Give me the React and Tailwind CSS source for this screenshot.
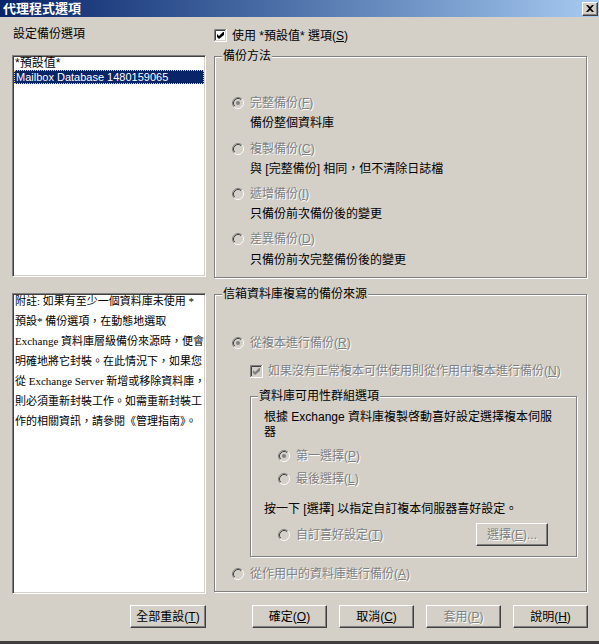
import React from "react";

const DIS = "text-[#808080] [text-shadow:1px_1px_0_#fff]";
const SUNKEN =
  "border border-t-[#808080] border-l-[#808080] border-b-white border-r-white shadow-[inset_1px_1px_0_#404040,inset_-1px_-1px_0_#d4d0c8]";

function Radio({ checked, disabled = true }) {
  return (
    <svg width="12" height="12" viewBox="0 0 12 12" className="shrink-0">
      <circle cx="6" cy="6" r="4.5" fill={disabled ? "#d4d0c8" : "#fff"} />
      <path d="M9.89 2.11 A5.5 5.5 0 0 0 2.11 9.89" stroke="#808080" fill="none" />
      <path d="M2.11 9.89 A5.5 5.5 0 0 0 9.89 2.11" stroke="#ffffff" fill="none" />
      <path d="M9.18 2.82 A4.5 4.5 0 0 0 2.82 9.18" stroke="#404040" fill="none" />
      <path d="M2.82 9.18 A4.5 4.5 0 0 0 9.18 2.82" stroke="#d4d0c8" fill="none" />
      {checked && <circle cx="6" cy="6" r="2" fill={disabled ? "#808080" : "#000"} />}
    </svg>
  );
}

function Check({ checked = true, disabled }) {
  return (
    <svg width="13" height="13" viewBox="0 0 13 13" className="shrink-0">
      <rect x="2" y="2" width="9" height="9" fill={disabled ? "#d4d0c8" : "#ffffff"} />
      <path d="M0.5 12 V0.5 H12" stroke="#808080" fill="none" />
      <path d="M1.5 11 V1.5 H11" stroke="#404040" fill="none" />
      <path d="M0 12.5 H12.5 V0" stroke="#ffffff" fill="none" />
      <path d="M1 11.5 H11.5 V1" stroke="#d4d0c8" fill="none" />
      {checked && (
        <polygon
          points="3,5 5,7 9,3 10,3 10,6 5,10 3,8"
          fill={disabled ? "#808080" : "#000000"}
        />
      )}
    </svg>
  );
}

function Group({ label, className, children }) {
  return (
    <div
      className={`relative border border-[#808080] shadow-[inset_1px_1px_0_#fff,1px_1px_0_#fff] ${className}`}
    >
      <span className="absolute left-[7px] -top-[8px] bg-[#d4d0c8] px-[1px] leading-[14px] whitespace-nowrap">
        {label}
      </span>
      {children}
    </div>
  );
}

function RadioRow({ checked, children, className = "" }) {
  return (
    <div className={`flex items-center h-[20px] gap-[6px] ${className}`}>
      <Radio checked={checked} />
      <span className={`${DIS} leading-[14px] whitespace-nowrap`}>{children}</span>
    </div>
  );
}

function Btn({ children, disabled, className = "" }) {
  return (
    <button
      className={`h-[23px] flex items-center justify-center bg-[#d4d0c8] border border-t-white border-l-white border-r-[#404040] border-b-[#404040] shadow-[inset_-1px_-1px_0_#808080] leading-[14px] whitespace-nowrap ${
        disabled ? DIS : "text-black"
      } ${className}`}
    >
      {children}
    </button>
  );
}

export default function App() {
  return (
    <div className="w-[599px] h-[644px] bg-[#d4d0c8] flex flex-col overflow-hidden text-[12px] leading-[14px] text-black font-['Liberation_Sans','Noto_Sans_CJK_TC',sans-serif]">
      {/* Title bar */}
      <div className="h-[17px] shrink-0 flex items-center justify-between bg-linear-to-r from-[#0a246a] to-[#a6caf0] pl-[3px] pr-[1px]">
        <span className="text-white font-bold text-[13px] leading-[16px]">代理程式選項</span>
        <div className="w-[16px] h-[14px] flex items-center justify-center bg-[#d4d0c8] border border-t-white border-l-white border-r-[#404040] border-b-[#404040] shadow-[inset_-1px_-1px_0_#808080]">
          <svg width="8" height="7" viewBox="0 0 8 7">
            <path d="M0 0 L2 0 L4 2 L6 0 L8 0 L5 3.5 L8 7 L6 7 L4 5 L2 7 L0 7 L3 3.5 Z" fill="#000" />
          </svg>
        </div>
      </div>

      {/* Main */}
      <div className="flex pt-[10px] pl-[12px] gap-[8px] h-[577px] shrink-0">
        {/* Left column */}
        <div className="w-[194px] flex flex-col">
          <div className="h-[28px] pl-[1px] leading-[14px]">設定備份選項</div>
          <div className={`h-[222px] bg-white p-[1px] text-[11px] ${SUNKEN}`}>
            <div className="h-[13px] pl-[1px] leading-[13px] text-[12px]">*預設值*</div>
            <div className="h-[14px] bg-[#0a246a] text-white border border-dotted border-[#e8d890] pl-[1px] leading-[12px] whitespace-nowrap">
              Mailbox Database 1480159065
            </div>
          </div>
          <div
            className={`mt-[16px] h-[301px] bg-white p-[1px] overflow-hidden text-[11px] ${SUNKEN} font-['Liberation_Serif','Noto_Sans_CJK_TC',serif]`}
          >
            <div className="pl-[1px] leading-[20px] -mt-[4px] whitespace-nowrap">
              附註: 如果有至少一個資料庫未使用 *
              <br />
              預設* 備份選項，在動態地選取
              <br />
              Exchange 資料庫層級備份來源時，便會
              <br />
              明確地將它封裝。在此情況下，如果您
              <br />
              從 Exchange Server 新增或移除資料庫，
              <br />
              則必須重新封裝工作。如需重新封裝工
              <br />
              作的相關資訊，請參閱《管理指南》。
            </div>
          </div>
        </div>

        {/* Right column */}
        <div className="w-[373px] flex flex-col">
          <div className="h-[29px] flex items-start gap-[5px] pt-[2px]">
            <Check />
            <span className="leading-[14px]">
              使用 *預設值* 選項(<u>S</u>)
            </span>
          </div>

          <Group label="備份方法" className="h-[222px] pt-[36px] pl-[17px]">
            <RadioRow checked>
              完整備份(<u>F</u>)
            </RadioRow>
            <div className="h-[20px] flex items-center pl-[18px]">備份整個資料庫</div>
            <RadioRow className="mt-[6px]">
              複製備份(<u>C</u>)
            </RadioRow>
            <div className="h-[20px] flex items-center pl-[18px]">與 [完整備份] 相同，但不清除日誌檔</div>
            <RadioRow className="mt-[5px]">
              遞增備份(<u>I</u>)
            </RadioRow>
            <div className="h-[20px] flex items-center pl-[18px]">只備份前次備份後的變更</div>
            <RadioRow className="mt-[5px]">
              差異備份(<u>D</u>)
            </RadioRow>
            <div className="h-[20px] mt-[1px] flex items-center pl-[18px]">只備份前次完整備份後的變更</div>
          </Group>

          <Group label="信箱資料庫複寫的備份來源" className="mt-[16px] h-[298px] pt-[38px] pl-[17px]">
            <RadioRow checked>
              從複本進行備份(<u>R</u>)
            </RadioRow>
            <div className="mt-[8px] h-[20px] flex items-center gap-[5px] pl-[18px]">
              <Check disabled />
              <span className={`${DIS} whitespace-nowrap`}>
                如果沒有正常複本可供使用則從作用中複本進行備份(<u>N</u>)
              </span>
            </div>

            <Group label="資料庫可用性群組選項" className="mt-[15px] ml-[18px] w-[327px] h-[161px] pt-[13px]">
              <div className="pl-[13px] leading-[15px] whitespace-nowrap">
                根據 Exchange 資料庫複製啓動喜好設定選擇複本伺服
                <br />器
              </div>
              <RadioRow checked className="mt-[6px] pl-[27px]">
                第一選擇(<u>P</u>)
              </RadioRow>
              <RadioRow className="mt-[3px] pl-[27px]">
                最後選擇(<u>L</u>)
              </RadioRow>
              <div className="mt-[10px] h-[20px] flex items-center pl-[13px] whitespace-nowrap">
                按一下 [選擇] 以指定自訂複本伺服器喜好設定。
              </div>
              <div className="mt-[4px] h-[23px] flex items-center justify-between pl-[27px] pr-[28px]">
                <div className="flex items-center gap-[6px]">
                  <Radio />
                  <span className={`${DIS} whitespace-nowrap`}>
                    自訂喜好設定(<u>T</u>)
                  </span>
                </div>
                <Btn disabled className="w-[72px]">
                  選擇(<u>E</u>)...
                </Btn>
              </div>
            </Group>

            <RadioRow className="mt-[7px]">
              從作用中的資料庫進行備份(<u>A</u>)
            </RadioRow>
          </Group>
        </div>
      </div>

      {/* Buttons */}
      <div className="mt-[11px] h-[23px] shrink-0 flex pl-[12px] gap-[8px]">
        <div className="w-[194px] flex justify-end">
          <Btn className="w-[76px]">
            全部重設(<u>T</u>)
          </Btn>
        </div>
        <div className="w-[374px] flex justify-end gap-[12px]">
          <Btn className="w-[75px]">
            確定(<u>O</u>)
          </Btn>
          <Btn className="w-[75px]">
            取消(<u>C</u>)
          </Btn>
          <Btn disabled className="w-[75px]">
            套用(<u>P</u>)
          </Btn>
          <Btn className="w-[75px]">
            說明(<u>H</u>)
          </Btn>
        </div>
      </div>

      <div className="flex-1" />
      <div className="h-[3px] shrink-0 bg-[#404040]" />
    </div>
  );
}
